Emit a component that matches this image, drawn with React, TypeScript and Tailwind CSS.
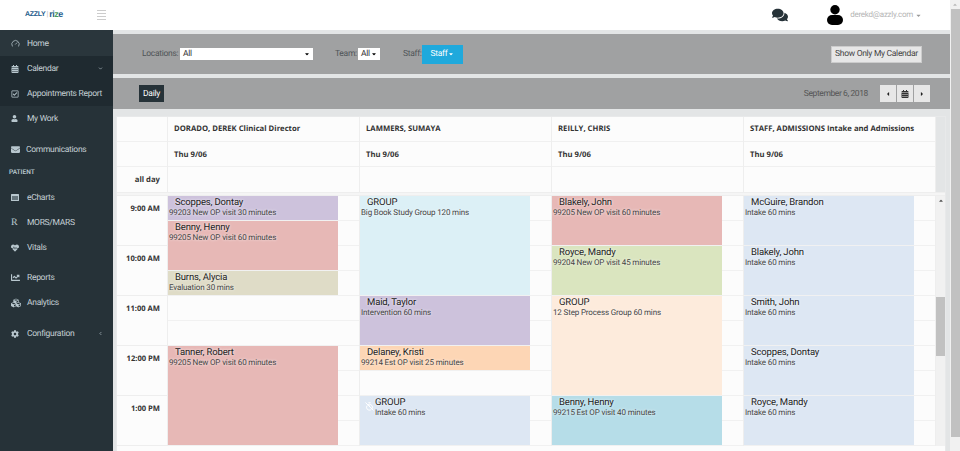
import { Gauge, ChevronDown, ChevronLeft, TimerOff } from "lucide-react";
import { FaComments, FaCaretDown, FaCaretLeft, FaCaretRight, FaCalendarAlt, FaUser, FaEnvelope, FaHeartbeat, FaChartLine, FaCog, FaRegCheckSquare, FaCubes } from "react-icons/fa";

type Ev = { row: number; span: number; bg: string; name: string; sub: string; icon?: boolean };

const cols: { head: string; events: Ev[] }[] = [
  {
    head: "DORADO, DEREK Clinical Director",
    events: [
      { row: 1, span: 2, bg: "bg-[#cdc2dc]", name: "Scoppes, Dontay", sub: "99203 New OP visit 30 minutes" },
      { row: 3, span: 4, bg: "bg-[#e7b8b6]", name: "Benny, Henny", sub: "99205 New OP visit 60 minutes" },
      { row: 7, span: 2, bg: "bg-[#dfdcc7]", name: "Burns, Alycia", sub: "Evaluation 30 mins" },
      { row: 13, span: 8, bg: "bg-[#e7b8b6]", name: "Tanner, Robert", sub: "99205 New OP visit 60 minutes" },
    ],
  },
  {
    head: "LAMMERS, SUMAYA",
    events: [
      { row: 1, span: 8, bg: "bg-[#dcf0f6]", name: "GROUP", sub: "Big Book Study Group 120 mins" },
      { row: 9, span: 4, bg: "bg-[#cdc2dc]", name: "Maid, Taylor", sub: "Intervention 60 mins" },
      { row: 13, span: 2, bg: "bg-[#fdd6b5]", name: "Delaney, Kristi", sub: "99214 Est OP visit 25 minutes" },
      { row: 17, span: 4, bg: "bg-[#dde7f3]", name: "GROUP", sub: "Intake 60 mins", icon: true },
    ],
  },
  {
    head: "REILLY, CHRIS",
    events: [
      { row: 1, span: 4, bg: "bg-[#e7b8b6]", name: "Blakely, John", sub: "99205 New OP visit 60 minutes" },
      { row: 5, span: 4, bg: "bg-[#dae5bf]", name: "Royce, Mandy", sub: "99204 New OP visit 45 minutes" },
      { row: 9, span: 8, bg: "bg-[#fdebdc]", name: "GROUP", sub: "12 Step Process Group 60 mins" },
      { row: 17, span: 4, bg: "bg-[#b6dde8]", name: "Benny, Henny", sub: "99215 Est OP visit 40 minutes" },
    ],
  },
  {
    head: "STAFF, ADMISSIONS Intake and Admissions",
    events: [
      { row: 1, span: 4, bg: "bg-[#dde7f3]", name: "McGuire, Brandon", sub: "Intake 60 mins" },
      { row: 5, span: 4, bg: "bg-[#dde7f3]", name: "Blakely, John", sub: "Intake 60 mins" },
      { row: 9, span: 4, bg: "bg-[#dde7f3]", name: "Smith, John", sub: "Intake 60 mins" },
      { row: 13, span: 4, bg: "bg-[#dde7f3]", name: "Scoppes, Dontay", sub: "Intake 60 mins" },
      { row: 17, span: 4, bg: "bg-[#dde7f3]", name: "Royce, Mandy", sub: "Intake 60 mins" },
    ],
  },
];

const times = ["9:00 AM", "10:00 AM", "11:00 AM", "12:00 PM", "1:00 PM"];

function NavItem({ icon, label, right, cls = "h-[25px]", textCls = "" }: { icon: React.ReactNode; label: string; right?: React.ReactNode; cls?: string; textCls?: string }) {
  return (
    <div className={`flex items-center pl-[11px] pr-[10px] ${cls}`}>
      <span className="w-[16px] shrink-0 flex justify-start text-[#b8c7ce]">{icon}</span>
      <span className={`text-[8.5px] tracking-[-0.3px] pt-[2px] whitespace-nowrap text-[#c5d0d5] ${textCls}`}>{label}</span>
      {right && <span className="ml-auto text-[#b8c7ce]">{right}</span>}
    </div>
  );
}

function EventCard({ e }: { e: Ev }) {
  const gridRow = `${e.row} / span ${e.span}`;
  return (
    <div style={{ gridRow }} className={`relative w-[170px] mb-[1px] ${e.bg} overflow-hidden`}>
      {e.icon && <TimerOff size={9} strokeWidth={2.5} className="absolute left-[5px] top-[6px] text-white" />}
      <div className={`text-[9.5px] tracking-[-0.15px] leading-[12px] pt-[1px] h-[12px] text-[#222] [text-shadow:0_0_3px_#fff] ${e.icon ? "pl-[15px]" : "pl-[7px]"}`}>{e.name}</div>
      <div className={`text-[8px] tracking-[-0.14px] leading-[10px] text-[#444] [text-shadow:0_0_3px_#fff] ${e.icon ? "pl-[15px]" : "pl-[1px]"}`}>{e.sub}</div>
    </div>
  );
}

export default function App() {
  return (
    <div className="h-[451px] w-[960px] overflow-hidden flex bg-[#e3e5e6] font-['Roboto',sans-serif] [text-rendering:geometricPrecision]">
      <div className="w-[950px] flex flex-col shrink-0">
        {/* top bar */}
        <div className="h-[30px] bg-white flex items-center shrink-0">
          <div className="w-[86px] pl-[25px] flex items-center font-bold font-['Liberation_Sans',sans-serif] whitespace-nowrap">
            <span className="text-[#1c5a8a] text-[7px] tracking-[-0.3px]">AZZLY</span>
            <span className="text-[#bbb] mx-[1px] text-[7px] font-normal">|</span>
            <span className="text-[#1c5a8a] text-[9px] tracking-[-0.5px]">ri</span>
            <span className="text-[#4e9a5c] text-[9px] tracking-[-0.5px]">z</span>
            <span className="text-[#1c5a8a] text-[9px]">e</span>
          </div>
          <div className="w-[9px] flex flex-col gap-[1.7px] ml-[11px]">
            <div className="h-px bg-[#ccc]" /><div className="h-px bg-[#ccc]" /><div className="h-px bg-[#ccc]" /><div className="h-px bg-[#ccc]" />
          </div>
          <FaComments className="ml-auto text-[16px] text-[#263238]" />
          <svg className="ml-[39px] shrink-0" width="16" height="20" viewBox="0 0 16 20" fill="#000">
            <circle cx="8" cy="4.7" r="4.7" />
            <rect x="0" y="10" width="16" height="10" rx="5" />
          </svg>
          <span className="ml-[7px] mr-[28px] text-[8px] tracking-[-0.25px] text-[#b5b5b5] flex items-center gap-[2px] whitespace-nowrap">derekd@azzly.com <FaCaretDown className="text-[7px] text-[#999]" /></span>
        </div>

        <div className="flex flex-1 min-h-0">
          {/* sidebar */}
          <aside className="w-[113px] bg-[#263238] shrink-0 flex flex-col">
            <NavItem cls="h-[26px] pt-[1px] bg-[#2a363c]" icon={<Gauge size={9} />} label="Home" />
            <div className="bg-[#1f2a30]">
              <NavItem icon={<FaCalendarAlt size={8} />} label="Calendar" right={<ChevronDown size={5} strokeWidth={3} />} />
              <NavItem icon={<FaRegCheckSquare size={8} />} label="Appointments Report" />
            </div>
            <NavItem icon={<FaUser size={7} />} label="My Work" />
            <NavItem cls="h-[25px] mt-[6px] pl-[10px]" icon={<FaEnvelope size={9} />} label="Communications" textCls="-ml-[1px]" />
            <div className="h-[21px] flex items-center pl-[9px] text-[6.5px] font-semibold text-[#b8c7ce]">PATIENT</div>
            <NavItem cls="h-[25px] mt-[2px]" icon={
              <svg width="8" height="7" viewBox="0 0 8 7"><rect width="8" height="7" rx="0.5" fill="#b8c7ce" /><rect x="1" y="2" width="6" height="4" fill="#66757c" /></svg>
            } label="eCharts" />
            <NavItem icon={<span className="text-[10px] leading-none font-['Liberation_Serif',serif]">R</span>} label="MORS/MARS" />
            <NavItem icon={<FaHeartbeat size={8} />} label="Vitals" />
            <NavItem cls="h-[25px] mt-[5px]" icon={<FaChartLine size={9} />} label="Reports" />
            <NavItem icon={<FaCubes size={10} />} label="Analytics" />
            <NavItem cls="h-[25px] mt-[6px]" icon={<FaCog size={8} />} label="Configuration" right={<ChevronLeft size={5} strokeWidth={3} />} />
          </aside>

          {/* main */}
          <main className="flex-1 min-w-0 flex flex-col">
            <div className="h-[4px] shrink-0" />
            <div className="h-[40px] shrink-0 bg-[#a0a1a2] flex items-center text-[8.5px] tracking-[-0.3px] text-[#4f5457] pl-[29px] pr-[28px] whitespace-nowrap">
              <span className="w-[35px] pt-[1px]">Locations:</span>
              <div className="ml-[3px] w-[133px] h-[12px] bg-white text-[#333] flex items-center justify-between px-[3px]"><span className="pt-[1px]">All</span><FaCaretDown className="text-[6px] text-black" /></div>
              <span className="ml-[22px] w-[20px] pt-[1px]">Team:</span>
              <div className="ml-[3px] w-[22px] h-[12px] bg-white text-[#333] flex items-center justify-between px-[3px]"><span className="pt-[1px]">All</span><FaCaretDown className="text-[6px] text-black" /></div>
              <span className="ml-[23px] w-[17px] pt-[1px]">Staff:</span>
              <div className="ml-[2px] w-[41px] h-[19px] bg-[#1fa9dc] text-white flex items-center justify-center gap-[1px]"><span className="pt-[1px]">Staff</span> <FaCaretDown className="text-[6px]" /></div>
              <div className="ml-auto w-[91px] h-[17px] bg-[#e7e7e7] border border-[#ccc] text-[#444] flex items-center justify-center"><span className="pt-[1px]">Show Only My Calendar</span></div>
            </div>
            <div className="h-[4px] shrink-0" />
            <div className="h-[31px] shrink-0 bg-[#a0a1a2] flex items-center text-[8.5px] tracking-[-0.3px] pl-[26px] pr-[20px]">
              <div className="h-[17px] w-[25px] bg-[#263238] text-white flex items-center justify-center"><span className="pt-[1px]">Daily</span></div>
              <span className="ml-auto mr-[12px] pt-[1px] text-[#555] tracking-[-0.4px]">September 6, 2018</span>
              <div className="flex gap-[1px]">
                <div className="w-[16px] h-[17px] bg-[#e7e7e7] flex items-center justify-center"><FaCaretLeft className="text-[6px] text-[#222]" /></div>
                <div className="w-[16px] h-[17px] bg-[#e7e7e7] flex items-center justify-center"><FaCalendarAlt className="text-[8px] text-[#333]" /></div>
                <div className="w-[16px] h-[17px] bg-[#e7e7e7] flex items-center justify-center"><FaCaretRight className="text-[6px] text-[#222]" /></div>
              </div>
            </div>

            {/* calendar */}
            <div className="ml-[3px] mr-[4px] mt-[7px] flex-1 min-h-0 bg-[#fcfcfc] border-t border-l border-r border-[#e8e9ea] text-[#333]">
              {/* header rows */}
              <div className="flex h-[75px] text-[7.7px] font-bold whitespace-nowrap font-['Open_Sans',sans-serif]">
                <div className="w-[51px] shrink-0 flex flex-col border-r border-[#eee] text-right">
                  <div className="h-[25px] border-b border-[#f0f0f0]" />
                  <div className="h-[25px] border-b border-[#f0f0f0]" />
                  <div className="h-[25px] pr-[7px] pt-[8px]">all day</div>
                </div>
                {cols.map((c) => (
                  <div key={c.head} className="w-[192px] shrink-0 flex flex-col border-r border-[#eee]">
                    <div className="h-[25px] border-b border-[#f0f0f0] flex items-center pl-[6px] pt-[2px]">{c.head}</div>
                    <div className="h-[25px] border-b border-[#f0f0f0] flex items-center pl-[6px] pt-[3px]">Thu 9/06</div>
                    <div className="h-[25px]" />
                  </div>
                ))}
                <div className="flex-1 bg-[#e3e5e6]" />
              </div>
              <div className="h-[4px] bg-[#f5f5f5] border-y border-[#eee]" />
              {/* body */}
              <div className="flex">
                <div className="w-[51px] shrink-0 border-r border-[#eee] text-[7.6px] font-bold text-right font-['Open_Sans',sans-serif]">
                  {times.map((t) => (
                    <div key={t} className="h-[50px] border-b border-[#eee] pr-[7px] pt-[8px] leading-[10px]">{t}</div>
                  ))}
                </div>
                {cols.map((c) => (
                  <div
                    key={c.head}
                    className="w-[192px] shrink-0 border-r border-[#eee] grid grid-rows-[repeat(20,12.5px)] content-start h-[250px] bg-[repeating-linear-gradient(to_bottom,transparent_0,transparent_24px,#f1f1f1_24px,#f1f1f1_25px)]"
                  >
                    {c.events.map((e) => (
                      <EventCard key={e.name + e.row} e={e} />
                    ))}
                  </div>
                ))}
                <div className="flex-1 bg-[#f1f1f1] flex flex-col items-center pt-[2px]">
                  <FaCaretDown className="text-[6px] rotate-180 text-[#555]" />
                  <div className="w-[9px] h-[59px] bg-[#c1c1c1] mt-[93px]" />
                </div>
              </div>
            </div>
          </main>
        </div>
      </div>
      {/* page scrollbar */}
      <div className="w-[10px] shrink-0 bg-[#f1f1f1] flex flex-col items-center pt-[2px]">
        <FaCaretDown className="text-[6px] rotate-180 text-[#bbb]" />
        <div className="w-[9px] h-[428px] bg-[#c1c1c1] mt-[1px]" />
      </div>
    </div>
  );
}
